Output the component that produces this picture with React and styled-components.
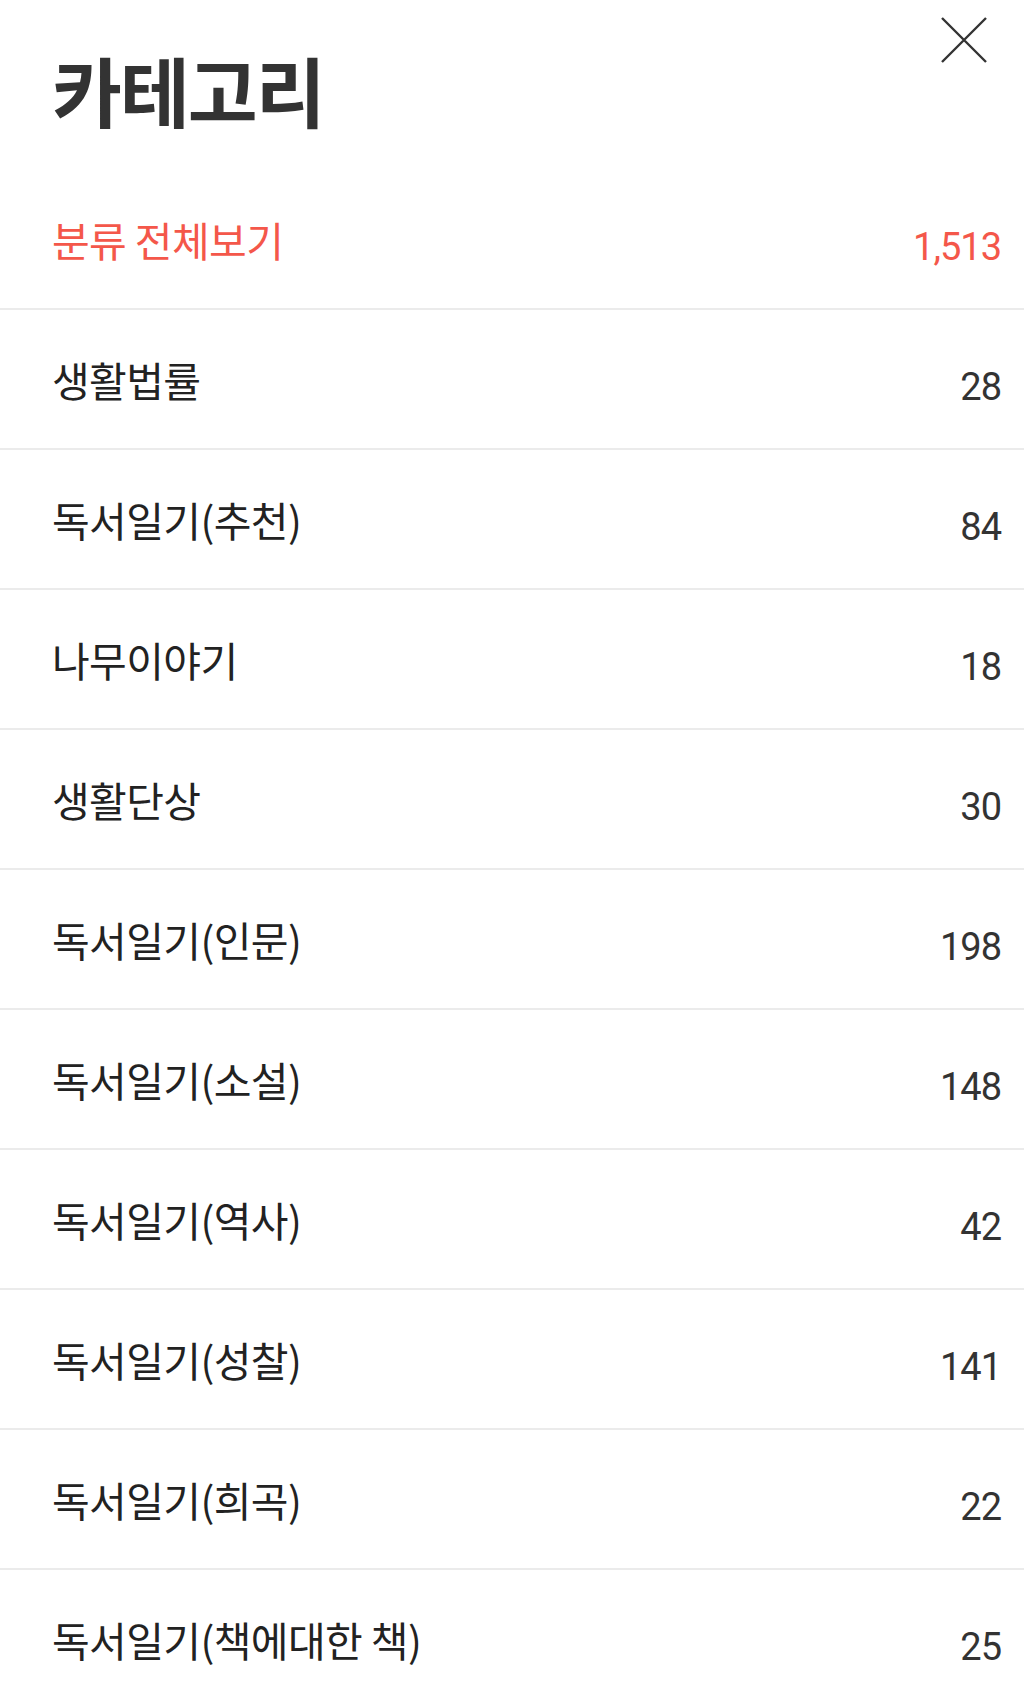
import styled, { createGlobalStyle } from 'styled-components'

const categories = [
  { name: '생활법률', count: 28 },
  { name: '독서일기(추천)', count: 84 },
  { name: '나무이야기', count: 18 },
  { name: '생활단상', count: 30 },
  { name: '독서일기(인문)', count: 198 },
  { name: '독서일기(소설)', count: 148 },
  { name: '독서일기(역사)', count: 42 },
  { name: '독서일기(성찰)', count: 141 },
  { name: '독서일기(희곡)', count: 22 },
  { name: '독서일기(책에대한 책)', count: 25 },
]

export default function App() {
  return (
    <Page>
      <GlobalStyle />
      <Header>
        <Title>카테고리</Title>
        <CloseButton aria-label="닫기">
          <svg width="46" height="46" viewBox="0 0 46 46">
            <path d="M1 1L45 45M45 1L1 45" stroke="#333" strokeWidth="2.4" fill="none" />
          </svg>
        </CloseButton>
      </Header>
      <List>
        <Row>
          <Label $active>분류 전체보기</Label>
          <Count $active>1,513</Count>
        </Row>
        {categories.map((c) => (
          <Row key={c.name}>
            <Label>{c.name}</Label>
            <Count>{c.count}</Count>
          </Row>
        ))}
      </List>
    </Page>
  )
}

const GlobalStyle = createGlobalStyle`
  body {
    margin: 0;
    background: #fff;
    font-family: "Noto Sans CJK KR", "Noto Sans", sans-serif;
  }
`
const Page = styled.div`
  width: 1024px;
`
const Header = styled.header`
  height: 170px;
  display: flex;
  justify-content: space-between;
  align-items: flex-start;
  padding-left: 52px;
  padding-right: 37px;
  box-sizing: border-box;
`
const Title = styled.h1`
  margin: 7px 0 0;
  align-self: center;
  font-size: 76px;
  font-weight: 700;
  line-height: 1;
  letter-spacing: -2px;
  color: #333;
`
const CloseButton = styled.button`
  margin-top: 17px;
  padding: 0;
  border: 0;
  background: none;
  display: flex;
  cursor: pointer;
`
const List = styled.ul`
  margin: 0;
  padding: 0;
  list-style: none;
`
const Row = styled.li`
  height: 140px;
  box-sizing: border-box;
  border-bottom: 2px solid #ebebeb;
  padding: 0 23px 0 52px;
  display: flex;
  align-items: center;
  justify-content: space-between;
`
const Label = styled.span`
  font-size: 41px;
  letter-spacing: -0.6px;
  line-height: 1;
  color: ${(p) => (p.$active ? '#f4574a' : '#222')};
`
const Count = styled.span`
  margin-top: 16px;
  font-family: Roboto, "Noto Sans", sans-serif;
  font-size: 38px;
  letter-spacing: -1px;
  line-height: 1;
  color: ${(p) => (p.$active ? '#f4574a' : '#333')};
`
